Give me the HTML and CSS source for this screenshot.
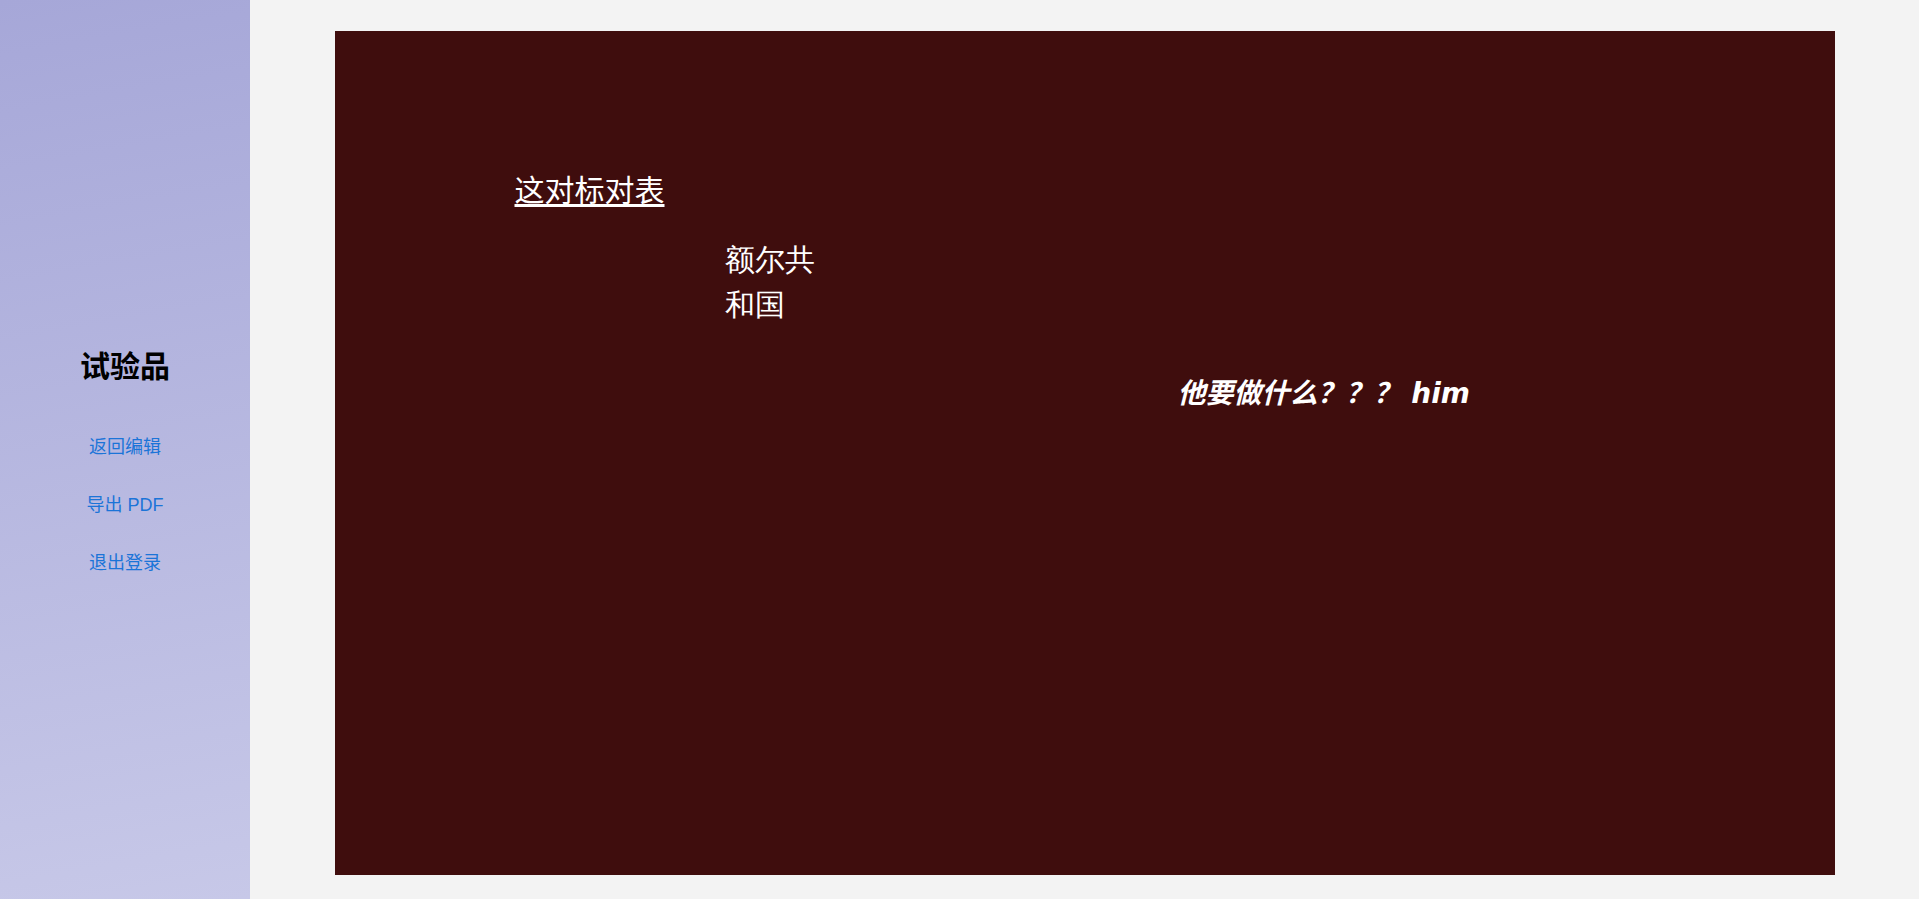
FILE: index.html
```html
<!DOCTYPE html>
<html lang="zh">
<head>
<meta charset="utf-8">
<title>试验品</title>
<link rel="stylesheet" href="styles.css">
</head>
<body>
<div class="app">
  <aside class="sidebar">
    <h1 class="brand">试验品</h1>
    <nav class="nav">
      <a class="nav-link" href="#">返回编辑</a>
      <a class="nav-link" href="#">导出 PDF</a>
      <a class="nav-link" href="#">退出登录</a>
    </nav>
  </aside>
  <main class="main">
    <section class="canvas">
      <div class="el el-title">这对标对表</div>
      <div class="el el-country">额尔共和国</div>
      <div class="el el-question">他要做什么？？？ him</div>
    </section>
  </main>
</div>
</body>
</html>
```
FILE: styles.css
```css
html, body {
  margin: 0;
  padding: 0;
  height: 100%;
}
body {
  background: #f3f3f3;
  font-family: "Noto Sans", "Noto Sans CJK SC", sans-serif;
}
.app {
  display: flex;
  height: 100vh;
}
.sidebar {
  width: 250px;
  flex: none;
  background: linear-gradient(170deg, #a6a7d8 0%, #c7c8e8 100%);
  display: flex;
  flex-direction: column;
  align-items: center;
  justify-content: center;
  padding-top: 23px;
  box-sizing: border-box;
}
.brand {
  margin: 0 0 53px;
  font-size: 30px;
  font-weight: 700;
  color: #000;
  font-family: "Noto Sans CJK SC", sans-serif;
  line-height: 1.2;
}
.nav {
  display: flex;
  flex-direction: column;
  align-items: center;
  gap: 33px;
}
.nav-link {
  font-family: "Liberation Sans", "Noto Sans CJK SC", sans-serif;
  font-size: 18px;
  color: #1b74d8;
  text-decoration: none;
  line-height: 25px;
}
.main {
  flex: 1;
  display: flex;
  justify-content: center;
  align-items: flex-start;
  padding-top: 31px;
}
.canvas {
  position: relative;
  width: 1500px;
  height: 844px;
  background: #3f0d0d;
  color: #fff;
}
.el {
  position: absolute;
}
.el-title {
  left: 180px;
  top: 139px;
  font-size: 30px;
  line-height: 1.2;
  text-decoration: underline;
  text-underline-offset: 3px;
  font-family: "Noto Sans CJK SC", sans-serif;
}
.el-country {
  left: 390px;
  top: 206px;
  width: 95px;
  font-size: 30px;
  line-height: 45px;
  font-family: serif;
}
.el-question {
  left: 843px;
  top: 346px;
  font-size: 28px;
  line-height: 1.2;
  font-weight: 700;
  font-style: italic;
  font-family: "DejaVu Sans", "Noto Sans CJK TC", sans-serif;
  white-space: nowrap;
}
```
